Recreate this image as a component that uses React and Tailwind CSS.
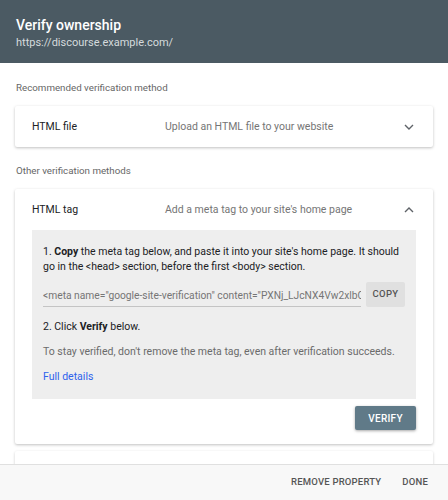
import React from 'react';

function Chevron({ up }) {
  return (
    <svg width="10" height="6" viewBox="0 0 10 6" className="shrink-0">
      <polyline
        points={up ? '1,5 5,1 9,5' : '1,1 5,5 9,1'}
        fill="none"
        stroke="#5f6368"
        strokeWidth="1.4"
      />
    </svg>
  );
}

function MethodHeader({ title, desc, up }) {
  return (
    <div className="flex items-center h-[41px] pl-[17px] pr-[19px]">
      <div className="w-[133px] text-[10.5px] text-[#202124]">{title}</div>
      <div className="flex-1 text-[10.5px] text-[#757575]">{desc}</div>
      <Chevron up={up} />
    </div>
  );
}

export default function App() {
  return (
    <div className="h-[500px] flex flex-col bg-white overflow-hidden font-['Roboto',sans-serif]">
      <div className="h-[63px] bg-[#4b5a63] px-4 pt-[15px] shrink-0">
        <div className="text-[14px] font-medium text-white leading-[20px]">Verify ownership</div>
        <div className="text-[11px] text-[#d5dadd] leading-[16px]">https://discourse.example.com/</div>
      </div>

      <div className="flex-1 overflow-hidden px-[15px]">
        <div className="pt-[18px] pb-[11px] pl-px text-[9.75px] leading-[14px] text-[#666]">
          Recommended verification method
        </div>
        <div className="bg-white rounded-[2px] shadow-[0_1px_3px_rgba(0,0,0,0.25)]">
          <MethodHeader title="HTML file" desc="Upload an HTML file to your website" />
        </div>

        <div className="pt-[17px] pb-[11px] pl-px text-[9.75px] leading-[14px] text-[#666]">
          Other verification methods
        </div>
        <div className="bg-white rounded-[2px] shadow-[0_1px_3px_rgba(0,0,0,0.25)] pb-[14px]">
          <MethodHeader title="HTML tag" desc="Add a meta tag to your site's home page" up />
          <div className="mx-[17px] bg-[#eeeeee] px-[11px] pt-[14px] pb-[15px]">
            <p className="text-[10.5px] leading-[15px] text-[#202124]">
              1. <span className="font-bold">Copy</span> the meta tag below, and paste it into your site's home page. It should go in the &lt;head&gt; section, before the first &lt;body&gt; section.
            </p>
            <div className="flex items-end mt-[8px] gap-[5px]">
              <div className="flex-1 min-w-0 border-b border-[#c4c4c4] pb-[3px] text-[10.25px] text-[#757575] whitespace-nowrap overflow-hidden">
                &lt;meta name="google-site-verification" content="PXNj_LJcNX4Vw2xlbQ8rT" /&gt;
              </div>
              <div className="w-[39px] h-[25px] bg-[#e0e0e0] rounded-[2px] flex items-center justify-center text-[9.5px] font-medium text-[#555] tracking-[0.3px]">
                COPY
              </div>
            </div>
            <p className="mt-[12px] text-[10.5px] leading-[15px] text-[#202124]">
              2. Click <span className="font-bold">Verify</span> below.
            </p>
            <p className="mt-[10px] text-[10.5px] leading-[15px] text-[#6b6b6b]">
              To stay verified, don't remove the meta tag, even after verification succeeds.
            </p>
            <p className="mt-[10px] text-[10.5px] leading-[15px] text-[#2f62ec]">Full details</p>
          </div>
          <div className="flex justify-end mt-[7px] mr-[17px]">
            <div className="w-[61px] h-[24px] bg-[#607a88] rounded-[2px] shadow-[0_1px_3px_rgba(0,0,0,0.35)] flex items-center justify-center text-[10px] font-medium text-white tracking-[0.3px]">
              VERIFY
            </div>
          </div>
        </div>
        <div className="mt-[7px] h-[20px] bg-white rounded-[2px] shadow-[0_1px_3px_rgba(0,0,0,0.2)]" />
      </div>

      <div className="h-[36px] shrink-0 bg-[#f8f8f8] border-t border-[#e0e0e0] flex items-center justify-end pr-[20px] gap-[21px] text-[9.5px] font-medium text-[#555] tracking-[0.2px]">
        <span>REMOVE PROPERTY</span>
        <span>DONE</span>
      </div>
    </div>
  );
}
